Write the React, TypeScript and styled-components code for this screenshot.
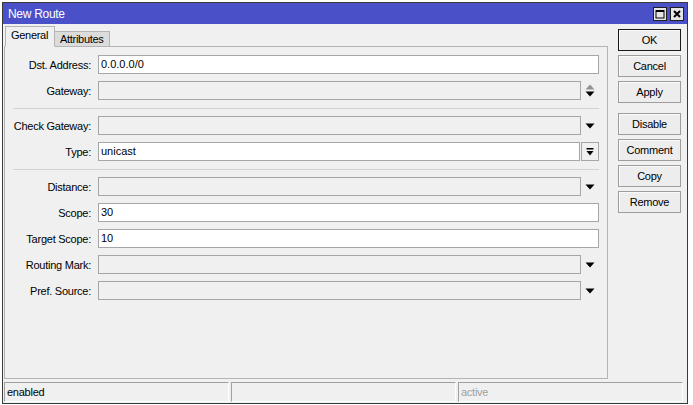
import React, { FC } from 'react';
import styled, { createGlobalStyle } from 'styled-components';

//region styled

const GlobalStyle = createGlobalStyle`
  body {
    margin: 0;
    background: #ffffff;
    font-family: "Liberation Sans", Arial, sans-serif;
    font-size: 11px;
    color: #000;
  }
`;

const Window = styled.div`
  margin: 2px 0 0 2px;
  width: 686px;
  height: 402px;
  box-sizing: border-box;
  border: 1px solid #3a3a3a;
  background: #f0f0f0;
  display: flex;
  flex-direction: column;
`;

const TitleBar = styled.div`
  height: 21px;
  flex: none;
  background: #4a50c8;
  color: #fff;
  font-size: 12px;
  letter-spacing: -0.3px;
  display: flex;
  align-items: center;
  justify-content: space-between;
  padding: 0 3px 0 5px;
`;

const TitleButtons = styled.div`
  display: flex;
  gap: 3px;
`;

const TitleButton = styled.div`
  width: 14px;
  height: 14px;
  box-sizing: border-box;
  border: 1px solid #1e1e1e;
  background: #e6e6e6;
  display: flex;
  align-items: center;
  justify-content: center;
`;

const Content = styled.div`
  flex: 1;
  min-height: 0;
  display: flex;
  gap: 10px;
  padding: 2px 6px 3px 1px;
`;

const TabArea = styled.div`
  width: 604px;
  flex: none;
  display: flex;
  flex-direction: column;
`;

const TabStrip = styled.div`
  height: 21px;
  flex: none;
  display: flex;
  align-items: flex-end;
  padding-left: 1px;
  margin-bottom: -1px;
  position: relative;
  z-index: 1;
`;

const Tab = styled.div<{ $active?: boolean }>`
  box-sizing: border-box;
  height: ${(p) => (p.$active ? '21px' : '16px')};
  padding: 0 ${(p) => (p.$active ? '6px' : '5px')} 0 5px;
  border: 1px solid #b4b4b4;
  border-left: ${(p) => (p.$active ? '1px solid #b4b4b4' : 'none')};
  border-bottom-color: ${(p) => (p.$active ? '#f0f0f0' : '#b4b4b4')};
  background: ${(p) => (p.$active ? '#f0f0f0' : '#dcdcdc')};
  display: flex;
  align-items: center;
  padding-bottom: ${(p) => (p.$active ? '3px' : '0')};
  letter-spacing: -0.3px;
`;

const Panel = styled.div`
  flex: 1;
  border: 1px solid #b4b4b4;
  padding: 8px 8px 0 8px;
  display: flex;
  flex-direction: column;
`;

const Section = styled.div`
  display: flex;
  flex-direction: column;
  gap: 7px;
`;

const Separator = styled.div`
  height: 1px;
  background: #d2d2d2;
  margin: 8px 0 7px;
`;

const Row = styled.div`
  display: grid;
  grid-template-columns: 79px 1fr;
  column-gap: 6px;
  height: 19px;
  align-items: center;
`;

const Label = styled.label`
  text-align: right;
  padding-right: 1px;
  white-space: nowrap;
  letter-spacing: -0.25px;
`;

const FieldWrap = styled.div`
  display: flex;
  height: 19px;
`;

const Field = styled.div<{ $empty?: boolean }>`
  flex: 1;
  box-sizing: border-box;
  height: 19px;
  border: 1px solid #a6a6a6;
  background: ${(p) => (p.$empty ? '#f0f0f0' : '#ffffff')};
  padding: 0 2px;
  line-height: 17px;
  white-space: nowrap;
  overflow: hidden;
`;

const IconSlot = styled.div<{ $boxed?: boolean }>`
  flex: none;
  box-sizing: border-box;
  width: 18px;
  margin-left: ${(p) => (p.$boxed ? '1px' : '0')};
  border: ${(p) => (p.$boxed ? '1px solid #a6a6a6' : 'none')};
  display: flex;
  align-items: center;
  justify-content: center;
`;

const ButtonColumn = styled.div`
  width: 63px;
  flex: none;
  padding-top: 3px;
  display: flex;
  flex-direction: column;
  gap: 10px;
`;

const ButtonGroup = styled.div`
  display: flex;
  flex-direction: column;
  gap: 4px;
`;

const Button = styled.button<{ $default?: boolean }>`
  height: 22px;
  box-sizing: border-box;
  padding: 0;
  font-family: inherit;
  font-size: 11px;
  letter-spacing: -0.25px;
  color: #000;
  background: #ededed;
  border: 1px solid ${(p) => (p.$default ? '#1a1a1a' : '#9d9d9d')};
  box-shadow: inset 1px 1px 0 #fafafa;
`;

const StatusBar = styled.div`
  height: 20px;
  flex: none;
  display: flex;
  gap: 2px;
  padding: 0 4px 1px 1px;
`;

const StatusCell = styled.div<{ $muted?: boolean; $width?: number }>`
  box-sizing: border-box;
  flex: ${(p) => (p.$width ? `0 0 ${p.$width}px` : '1')};
  border-top: 1px solid #a0a0a0;
  border-left: 1px solid #a0a0a0;
  border-right: 1px solid #ffffff;
  border-bottom: 1px solid #ffffff;
  padding-left: 2px;
  line-height: 18px;
  letter-spacing: -0.25px;
  color: ${(p) => (p.$muted ? '#a0a0a0' : '#000')};
`;

//endregion

const DownArrow: FC = () => (
  <svg width="10" height="6" viewBox="0 0 10 6">
    <path d="M0.5 0.5H9.5L5 5.5Z" fill="#000" />
  </svg>
);

const UpDownArrow: FC = () => (
  <svg width="10" height="13" viewBox="0 0 10 13">
    <path d="M0.5 5.5L5 0.5L9.5 5.5Z" fill="#8b978b" />
    <path d="M0.5 7.5H9.5L5 12.5Z" fill="#000" />
  </svg>
);

const BottomArrow: FC = () => (
  <svg width="8" height="8" viewBox="0 0 8 8">
    <rect x="0.5" y="0" width="7" height="1.5" fill="#000" />
    <path d="M0.5 3H7.5L4 7.5Z" fill="#000" />
  </svg>
);

type Kind = 'text' | 'select' | 'spin' | 'combo';

interface FieldProps {
  label: string;
  value?: string;
  kind?: Kind;
}

const FormRow: FC<FieldProps> = ({ label, value, kind = 'text' }) => (
  <Row>
    <Label>{label}:</Label>
    <FieldWrap>
      <Field $empty={value === undefined}>{value}</Field>
      {kind === 'select' && (
        <IconSlot>
          <DownArrow />
        </IconSlot>
      )}
      {kind === 'spin' && (
        <IconSlot>
          <UpDownArrow />
        </IconSlot>
      )}
      {kind === 'combo' && (
        <IconSlot $boxed>
          <BottomArrow />
        </IconSlot>
      )}
    </FieldWrap>
  </Row>
);

const App: FC = () => {
  return (
    <>
      <GlobalStyle />
      <Window>
        <TitleBar>
          <span>New Route</span>
          <TitleButtons>
            <TitleButton>
              <svg width="10" height="10" viewBox="0 0 10 10">
                <rect x="1" y="1.5" width="8" height="7.5" fill="none" stroke="#000" strokeWidth="1" />
                <rect x="1" y="1" width="8" height="2" fill="#000" />
              </svg>
            </TitleButton>
            <TitleButton>
              <svg width="10" height="10" viewBox="0 0 10 10">
                <path d="M2 2L8 8M8 2L2 8" stroke="#000" strokeWidth="2" />
              </svg>
            </TitleButton>
          </TitleButtons>
        </TitleBar>

        <Content>
          <TabArea>
            <TabStrip>
              <Tab $active>General</Tab>
              <Tab>Attributes</Tab>
            </TabStrip>
            <Panel>
              <Section>
                <FormRow label="Dst. Address" value="0.0.0.0/0" />
                <FormRow label="Gateway" kind="spin" />
              </Section>
              <Separator />
              <Section>
                <FormRow label="Check Gateway" kind="select" />
                <FormRow label="Type" value="unicast" kind="combo" />
              </Section>
              <Separator />
              <Section>
                <FormRow label="Distance" kind="select" />
                <FormRow label="Scope" value="30" />
                <FormRow label="Target Scope" value="10" />
                <FormRow label="Routing Mark" kind="select" />
                <FormRow label="Pref. Source" kind="select" />
              </Section>
            </Panel>
          </TabArea>

          <ButtonColumn>
            <ButtonGroup>
              <Button $default>OK</Button>
              <Button>Cancel</Button>
              <Button>Apply</Button>
            </ButtonGroup>
            <ButtonGroup>
              <Button>Disable</Button>
              <Button>Comment</Button>
              <Button>Copy</Button>
              <Button>Remove</Button>
            </ButtonGroup>
          </ButtonColumn>
        </Content>

        <StatusBar>
          <StatusCell $width={225}>enabled</StatusCell>
          <StatusCell $width={225} />
          <StatusCell $muted>active</StatusCell>
        </StatusBar>
      </Window>
    </>
  );
};

export default App;
